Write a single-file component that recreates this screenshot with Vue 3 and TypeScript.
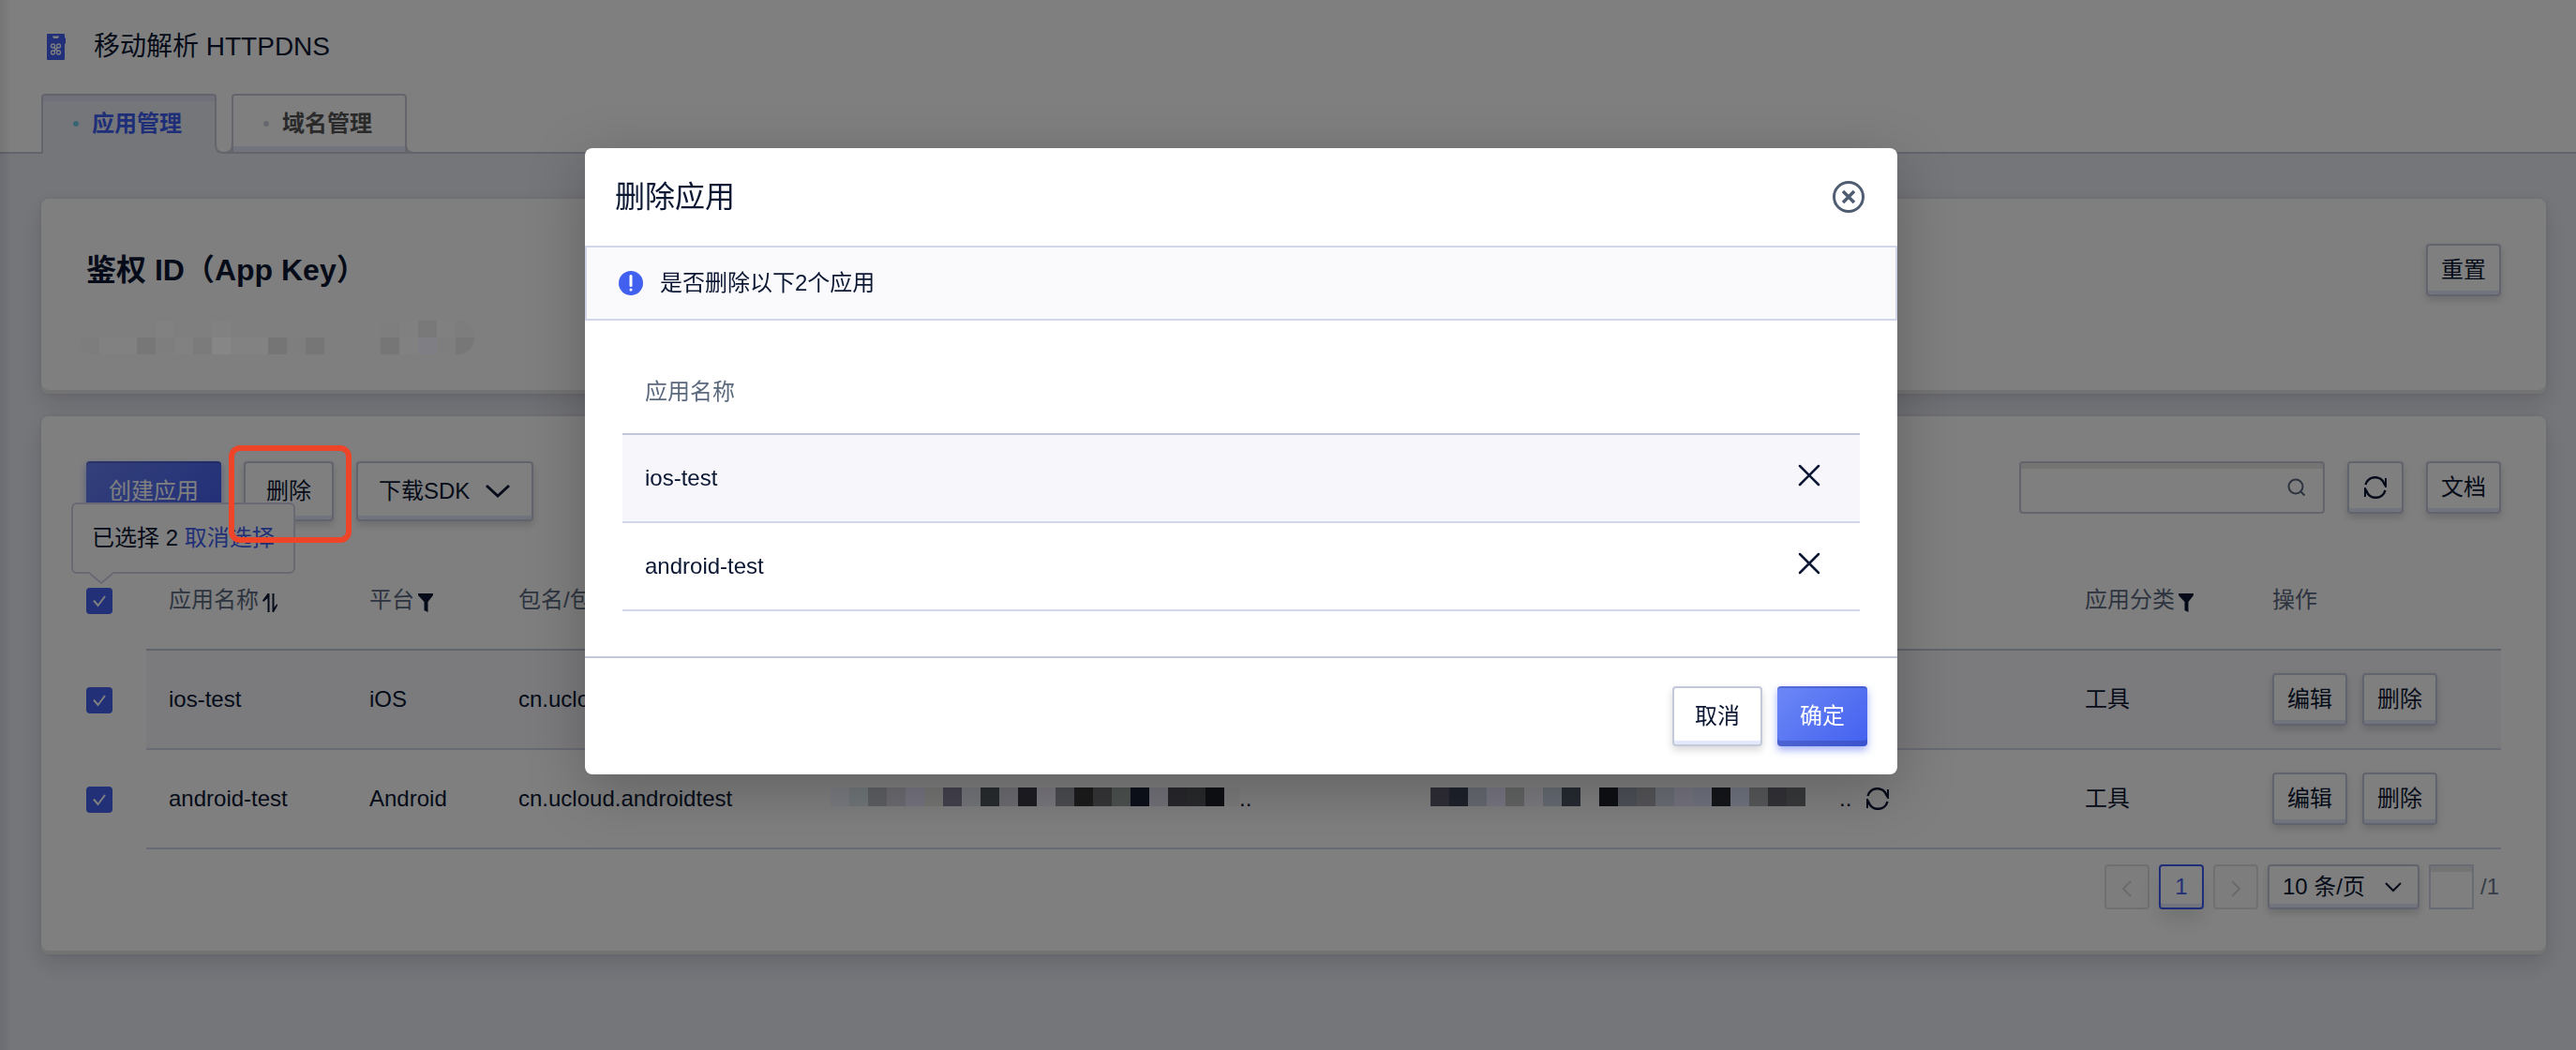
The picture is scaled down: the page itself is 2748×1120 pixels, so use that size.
<script setup lang="ts">
import { ref } from 'vue'

interface AppRow {
  name: string
  platform: string
  pack: string
  category: string
  checked: boolean
  key: string[]
  secret: string[]
}

const idMaskTop = [
  '', '', '', '', '#818181', '', '', '#818181', '', '', '', '', '', '', '', '',
  '#7e7e7e', '#808080', '#797979', '#808080', '#7d7d7d',
]
const idMaskBottom = [
  '#7d7d7d', '#818181', '#818181', '#777777', '#7e7e7e', '#818181', '#7b7b7b',
  '#868686', '#828282', '#828282', '#757575', '#7e7e7e', '#767676', '', '', '',
  '#767676', '#818181', '#7e7e84', '#7e7e7e', '#777777',
]
const keyMask = [
  '#7b7c82', '#71777a', '#5f6064', '#6c6c72', '#767581', '#767775', '#43424e',
  '#75767b', '#282c2f', '#6d6c72', '#1d1d23', '#7a787f', '#4c4d51', '#1b1c1b',
  '#363639', '#4d5250', '#0d111a', '#73727a', '#28272b', '#292a2c', '#0f1014',
  '#7c7c7c',
]
const secretMask = [
  '#2f2e38', '#1e222b', '#666a72', '#787782', '#636464', '#7c7b7f', '#666b73',
  '#262a32', '', '#0f1014', '#4d5058', '#555559', '#6a6d75', '#74737f',
  '#70737e', '#15161b', '#70747f', '#57585a', '#323238', '#38393b', '', '',
]

const rows = ref<AppRow[]>([
  { name: 'ios-test', platform: 'iOS', pack: 'cn.ucloud.iostest', category: '工具', checked: true, key: [], secret: [] },
  { name: 'android-test', platform: 'Android', pack: 'cn.ucloud.androidtest', category: '工具', checked: true, key: keyMask, secret: secretMask },
])
const allChecked = ref(true)
const keyword = ref('')
const jump = ref('')
</script>

<template>
  <div class="page">
    <header class="top">
      <div class="product">
        <svg class="phone" width="20" height="28" viewBox="0 0 20 28" aria-hidden="true">
          <path d="M1 0H18Q19 0 19 1V4L20 5V10L19 11V27Q19 28 18 28H1Q0 28 0 27V1Q0 0 1 0Z" fill="#4460f2" />
          <path d="M6 2.500H13Q12.500 5 11 5H8Q6.500 5 6 2.500Z" fill="#fff" />
          <g fill="none" stroke="#fff" stroke-width="1.300">
            <circle cx="6.500" cy="13" r="2" />
            <circle cx="12.500" cy="13" r="2" />
            <circle cx="6.500" cy="20" r="2" />
            <circle cx="12.500" cy="20" r="2" />
            <path d="M7.500 14.500L11.500 18.500M11.500 14.500L7.500 18.500" />
          </g>
        </svg>
        <h1>移动解析 HTTPDNS</h1>
      </div>
      <nav class="tabs">
        <a href="#apps" class="tab active">
          <i class="dot"></i><span>应用管理</span>
          <svg class="foot foot-right" width="14" height="14" viewBox="0 0 14 14" aria-hidden="true">
            <path class="foot-fill" d="M0 0H1V4Q1 13 10 13V14H0Z" />
            <path class="foot-line" d="M1 0V4Q1 13 10 13H14" />
          </svg>
        </a>
        <a href="#domains" class="tab">
          <svg class="foot foot-left" width="14" height="14" viewBox="0 0 14 14" aria-hidden="true">
            <path class="foot-line" d="M1 4Q1 13 10 13" />
          </svg>
          <i class="dot"></i><span>域名管理</span>
          <svg class="foot foot-right" width="14" height="14" viewBox="0 0 14 14" aria-hidden="true">
            <path class="foot-line" d="M1 4Q1 13 10 13" />
          </svg>
        </a>
      </nav>
    </header>

    <main class="content">
      <section class="card auth">
        <div class="auth-head">
          <h2>鉴权 ID（App Key）</h2>
          <button type="button" class="btn small">重置</button>
        </div>
        <div class="id-mask">
          <div class="mosaic">
            <span v-for="(c, i) in idMaskTop" :key="i" :style="{ background: c }"></span>
          </div>
          <div class="mosaic">
            <span v-for="(c, i) in idMaskBottom" :key="i" :style="{ background: c }"></span>
          </div>
        </div>
      </section>

      <section class="card list">
        <div class="toolbar">
          <button type="button" class="btn primary">创建应用</button>
          <div class="marked">
            <button type="button" class="btn">删除</button>
            <div class="marker"></div>
          </div>
          <button type="button" class="btn" aria-haspopup="menu">
            下载SDK
            <svg class="caret" width="28" height="28" viewBox="0 0 28 28" aria-hidden="true">
              <path d="M2 8L14 19L26 8" />
            </svg>
          </button>
          <div class="tools">
            <div class="search">
              <input v-model="keyword" type="text" aria-label="搜索" />
              <svg width="20" height="20" viewBox="0 0 20 20" aria-hidden="true">
                <circle cx="9" cy="9" r="7.500" />
                <path d="M14.500 14.500L18.500 18.500" />
              </svg>
            </div>
            <button type="button" class="btn small square" aria-label="刷新">
              <svg class="refresh" width="24" height="24" viewBox="0 0 24 24" aria-hidden="true">
                <path class="arc" d="M1.500 9A10.500 10.500 0 0 1 21.500 8M22.500 15A10.500 10.500 0 0 1 2.500 16" />
                <path class="tip" d="M22 2H24V12H22.500L20 8L22 7ZM2 22H0V12H1.500L4 16L2 17Z" />
              </svg>
            </button>
            <button type="button" class="btn small">文档</button>
          </div>
        </div>

        <table class="apps">
          <colgroup>
            <col class="w-check" /><col class="w-name" /><col class="w-platform" />
            <col class="w-pack" /><col /><col class="w-secret" />
            <col class="w-category" /><col class="w-actions" />
          </colgroup>
          <thead>
            <tr>
              <th class="pick">
                <label class="check">
                  <input v-model="allChecked" type="checkbox" aria-label="全选" />
                  <svg width="28" height="28" viewBox="0 0 28 28" aria-hidden="true"><path d="M8 13.500L12.500 19L20 9" /></svg>
                </label>
                <div class="picked">
                  已选择 2 <a href="#clear">取消选择</a>
                  <svg class="beak" width="26" height="13" viewBox="0 0 26 13" aria-hidden="true">
                    <path class="beak-fill" d="M0 0H26L13 12Z" />
                    <path class="beak-line" d="M0 1L13 12L26 1" />
                  </svg>
                </div>
              </th>
              <th>
                <span class="head">应用名称
                  <svg width="16" height="26" viewBox="0 -6 16 26" aria-hidden="true">
                    <path d="M0 7.500L5.500 0H7.500V20H5.500V5L1 9ZM10.500 0H12.500V15L15.500 11L16 13L12 20H10.500Z" />
                  </svg>
                </span>
              </th>
              <th>
                <span class="head">平台
                  <svg width="16" height="26" viewBox="0 -6 16 26" aria-hidden="true">
                    <path d="M0 0H16V2L10.500 9V20L6.500 18V9L0 2Z" />
                  </svg>
                </span>
              </th>
              <th>包名/包</th>
              <th></th>
              <th></th>
              <th>
                <span class="head">应用分类
                  <svg width="16" height="26" viewBox="0 -6 16 26" aria-hidden="true">
                    <path d="M0 0H16V2L10.500 9V20L6.500 18V9L0 2Z" />
                  </svg>
                </span>
              </th>
              <th>操作</th>
            </tr>
          </thead>
          <tbody>
            <tr v-for="row in rows" :key="row.name">
              <td class="pick">
                <label class="check">
                  <input v-model="row.checked" type="checkbox" :aria-label="row.name" />
                  <svg width="28" height="28" viewBox="0 0 28 28" aria-hidden="true"><path d="M8 13.500L12.500 19L20 9" /></svg>
                </label>
              </td>
              <td>{{ row.name }}</td>
              <td>{{ row.platform }}</td>
              <td>{{ row.pack }}</td>
              <td>
                <div v-if="row.key.length" class="masked">
                  <div class="mosaic"><span v-for="(c, i) in row.key" :key="i" :style="{ background: c }"></span></div>
                  <span>..</span>
                </div>
              </td>
              <td>
                <div v-if="row.secret.length" class="masked">
                  <div class="mosaic"><span v-for="(c, i) in row.secret" :key="i" :style="{ background: c }"></span></div>
                  <span>..</span>
                  <svg class="refresh" width="24" height="24" viewBox="0 0 24 24" aria-hidden="true">
                    <path class="arc" d="M1.500 9A10.500 10.500 0 0 1 21.500 8M22.500 15A10.500 10.500 0 0 1 2.500 16" />
                    <path class="tip" d="M22 2H24V12H22.500L20 8L22 7ZM2 22H0V12H1.500L4 16L2 17Z" />
                  </svg>
                </div>
              </td>
              <td>{{ row.category }}</td>
              <td>
                <div class="actions">
                  <button type="button" class="btn small">编辑</button>
                  <button type="button" class="btn small">删除</button>
                </div>
              </td>
            </tr>
          </tbody>
        </table>

        <div class="pager">
          <button type="button" class="page-btn" disabled aria-label="上一页">
            <svg width="16" height="24" viewBox="0 0 16 24" aria-hidden="true"><path d="M12 6L4 14L12 22" /></svg>
          </button>
          <button type="button" class="page-btn current">1</button>
          <button type="button" class="page-btn" disabled aria-label="下一页">
            <svg width="16" height="24" viewBox="0 0 16 24" aria-hidden="true"><path d="M4 6L12 14L4 22" /></svg>
          </button>
          <div class="size">
            <select aria-label="每页条数">
              <option>10 条/页</option>
            </select>
            <svg width="18" height="12" viewBox="0 0 18 12" aria-hidden="true"><path d="M1 2L9 10L17 2" /></svg>
          </div>
          <input v-model="jump" class="jump" type="text" aria-label="跳至页" />
          <span class="total">/1</span>
        </div>
      </section>
    </main>

    <div class="backdrop"></div>

    <div class="layer">
      <div class="modal" role="dialog" aria-labelledby="dialog-title">
        <div class="modal-head">
          <h2 id="dialog-title">删除应用</h2>
          <button type="button" class="plain" aria-label="关闭">
            <svg width="34" height="34" viewBox="0 0 34 34" fill="none" stroke="#4f5d73" aria-hidden="true">
              <circle cx="17" cy="17" r="15.500" stroke-width="3" />
              <path d="M11 11L23 23M23 11L11 23" stroke-width="3.500" />
            </svg>
          </button>
        </div>
        <div class="notice">
          <svg width="26" height="26" viewBox="0 0 26 26" aria-hidden="true">
            <circle cx="13" cy="13" r="13" fill="#4260ef" />
            <rect x="11.500" y="4" width="3" height="13" rx="1.500" fill="#fff" />
            <circle cx="13" cy="20" r="1.500" fill="#fff" />
          </svg>
          <span>是否删除以下2个应用</span>
        </div>
        <div class="modal-body">
          <table class="targets">
            <thead>
              <tr><th>应用名称</th><th class="w-remove"></th></tr>
            </thead>
            <tbody>
              <tr v-for="row in rows" :key="row.name">
                <td>{{ row.name }}</td>
                <td class="w-remove">
                  <button type="button" class="plain" aria-label="移除">
                    <svg width="24" height="30" viewBox="0 0 24 30" aria-hidden="true">
                      <path d="M2 2L22 22M22 2L2 22" fill="none" stroke="#0b1733" stroke-width="2.500" stroke-linecap="round" />
                    </svg>
                  </button>
                </td>
              </tr>
            </tbody>
          </table>
        </div>
        <div class="modal-foot">
          <button type="button" class="btn">取消</button>
          <button type="button" class="btn primary">确定</button>
        </div>
      </div>
    </div>
  </div>
</template>

<style>
body {
  margin: 0;
  background: #ebedf5;
}
</style>

<style scoped>
.page,
.page * {
  box-sizing: border-box;
}
.page {
  min-height: 100vh;
  background: #ebedf5;
  color: #0b1733;
  font-family: "Liberation Sans", "Noto Sans CJK SC", sans-serif;
  font-size: 24px;
  line-height: 32px;
}
button,
input,
select {
  font: inherit;
  color: inherit;
  margin: 0;
}
h1,
h2 {
  margin: 0;
  font-weight: 400;
}
a {
  text-decoration: none;
}
svg {
  display: block;
  flex: none;
}

.top {
  background: #fff;
  border-bottom: 2px solid #c8cbd8;
  padding-left: 44px;
}
.product {
  display: flex;
  align-items: center;
  gap: 30px;
  height: 100px;
  padding-left: 6px;
}
.product h1 {
  font-size: 28px;
}
.tabs {
  display: flex;
  gap: 16px;
}
.tab {
  position: relative;
  display: flex;
  align-items: center;
  height: 62px;
  padding: 0 35px 0 32px;
  border: 2px solid #c8cbd8;
  border-bottom: 0;
  border-radius: 4px 4px 0 0;
  box-shadow: inset 0 -6px #e3e7fb;
  color: #545454;
  font-weight: 700;
}
.tab.active {
  height: 64px;
  margin-bottom: -2px;
  padding-bottom: 2px;
  background: #ebedf5;
  box-shadow: inset 0 6px #dfe0f4;
  color: #3f5cf0;
}
.dot {
  width: 6px;
  height: 6px;
  margin-right: 14px;
  border-radius: 3px;
  background: #d0d3dc;
}
.active .dot {
  background: #6ecbe6;
}
.foot {
  position: absolute;
  bottom: -2px;
}
.active .foot {
  bottom: 0;
}
.foot-right {
  left: 100%;
}
.foot-left {
  right: 100%;
  transform: scaleX(-1);
}
.foot-fill {
  fill: #ebedf5;
}
.foot-line {
  fill: none;
  stroke: #c8cbd8;
  stroke-width: 2;
}

.content {
  display: flex;
  flex-direction: column;
  gap: 24px;
  padding: 48px 32px 48px 44px;
}
.card {
  border-radius: 8px;
  background: #fff;
  box-shadow: inset 0 -4px #e6e6e6, 0 0 4px rgba(30, 35, 60, 0.08), 0 10px 24px rgba(20, 20, 40, 0.14);
}
.auth {
  padding: 48px 48px 42px;
}
.auth-head {
  display: flex;
  align-items: center;
  justify-content: space-between;
}
.auth-head h2 {
  font-size: 32px;
  font-weight: 700;
}
.mosaic {
  position: relative;
  z-index: 15;
  display: flex;
}
.mosaic span {
  width: 20px;
  height: 20px;
}
.id-mask {
  margin: 26px 0 0 -6px;
}
.id-mask .mosaic span {
  height: 18px;
}
.id-mask .mosaic:first-child span:last-child {
  border-top-right-radius: 18px;
}
.id-mask .mosaic:last-child span:last-child {
  border-bottom-right-radius: 18px;
}
.id-mask .mosaic:last-child span:first-child {
  border-bottom-left-radius: 10px;
}

.btn {
  display: flex;
  align-items: center;
  justify-content: center;
  gap: 16px;
  height: 64px;
  padding: 0 22px;
  border: 2px solid #c3c9d9;
  border-radius: 4px;
  background: #fff;
  box-shadow: inset 0 -4px #e3e8fb, 0 4px 8px rgba(0, 0, 0, 0.16);
  white-space: nowrap;
}
.btn.small {
  height: 56px;
  padding: 0 14px;
}
.btn.square {
  width: 60px;
}
.btn.primary {
  padding: 0 24px;
  border: 0;
  background: linear-gradient(135deg, #6d88f6, #4260ef);
  box-shadow: inset 0 2px rgba(40, 50, 130, 0.3), inset 0 -6px rgba(40, 50, 130, 0.3), 0 4px 8px rgba(66, 96, 239, 0.5);
  color: #fff;
}
.caret path,
.size path {
  fill: none;
  stroke: #0b1733;
  stroke-width: 3;
}
.refresh .arc {
  fill: none;
  stroke: #0b1733;
  stroke-width: 2.5;
}
.refresh .tip {
  fill: #0b1733;
}

.list {
  padding: 48px;
}
.list .primary {
  background: linear-gradient(135deg, #6981f4, #425df0);
}
.toolbar {
  display: flex;
  align-items: flex-start;
  gap: 24px;
}
.marked {
  position: relative;
}
.marker {
  position: absolute;
  z-index: 30;
  inset: -17px -19px -23px -16px;
  border: 6px solid #ee4427;
  border-radius: 12px;
  pointer-events: none;
}
.tools {
  display: flex;
  gap: 24px;
  margin-left: auto;
}
.search {
  display: flex;
  align-items: center;
  width: 326px;
  height: 56px;
  padding-right: 18px;
  border: 2px solid #c8cbd8;
  border-radius: 4px;
  box-shadow: inset 0 6px #e9e9e7;
}
.search input {
  flex: 1;
  min-width: 0;
  height: 40px;
  padding: 0 16px;
  border: 0;
  outline: 0;
  background: none;
}
.search svg {
  fill: none;
  stroke: #5b697f;
  stroke-width: 2;
}

table {
  width: 100%;
  border-spacing: 0;
  table-layout: fixed;
}
th,
td {
  text-align: left;
  font-weight: 400;
  white-space: nowrap;
}
th {
  color: #5b697f;
  border-bottom: 2px solid #c1c8d6;
}
td {
  border-bottom: 2px solid #d3d6e9;
}
tbody tr:first-child td {
  background: #f6f6fb;
}
.apps {
  margin-top: 32px;
}
.apps th,
.apps td {
  height: 106px;
  padding: 0 24px;
}
.apps tbody tr .pick,
.apps .pick {
  position: relative;
  padding: 0;
  border: 0;
  background: none;
}
.w-check {
  width: 64px;
}
.w-name {
  width: 214px;
}
.w-platform {
  width: 159px;
}
.w-pack {
  width: 333px;
}
.w-secret {
  width: 698px;
}
.w-category {
  width: 200px;
}
.w-actions {
  width: 268px;
}
.head {
  display: flex;
  align-items: center;
  gap: 4px;
}
.head svg {
  fill: #0b1733;
}
.check {
  display: grid;
  width: 28px;
  height: 28px;
}
.check input,
.check svg {
  grid-area: 1 / 1;
}
.check input {
  appearance: none;
  width: 28px;
  height: 28px;
  border-radius: 4px;
  background: #4260ef;
}
.check svg {
  fill: none;
  stroke: #fff;
  stroke-width: 2;
  pointer-events: none;
}
.picked {
  position: absolute;
  z-index: 1;
  bottom: 82px;
  left: -16px;
  height: 76px;
  padding: 20px;
  border: 2px solid #d0d3e4;
  border-radius: 6px;
  background: #fff;
  color: #0b1733;
}
.picked a {
  color: #4260ef;
}
.beak {
  position: absolute;
  top: 100%;
  left: 17px;
}
.beak-fill {
  fill: #fff;
}
.beak-line {
  fill: none;
  stroke: #d0d3e4;
  stroke-width: 2;
}
.masked {
  display: flex;
  align-items: flex-start;
  height: 32px;
}
.masked .mosaic,
.masked .refresh {
  margin-top: 4px;
}
.masked .mosaic span:last-child {
  width: 16px;
}
.masked .refresh {
  margin-left: 16px;
}
.actions {
  display: flex;
  gap: 16px;
}

.pager {
  display: flex;
  justify-content: flex-end;
  align-items: center;
  gap: 10px;
  margin-top: 16px;
}
.page-btn {
  display: flex;
  align-items: center;
  justify-content: center;
  width: 48px;
  height: 48px;
  padding: 0;
  border: 2px solid #e0e0e0;
  border-radius: 4px;
  background: #fafafa;
}
.page-btn path {
  fill: none;
  stroke: #d4d4d4;
  stroke-width: 2;
}
.page-btn.current {
  border-color: #3f5cf0;
  background: #fff;
  box-shadow: inset 0 -4px #e3e8fb, 0 12px 20px rgba(0, 0, 0, 0.1);
  color: #4260ef;
}
.size {
  display: grid;
  align-items: center;
  width: 162px;
  height: 48px;
  border: 2px solid #c3c9d9;
  border-radius: 4px;
  box-shadow: inset 0 -4px #e3e8fb, 0 4px 8px rgba(0, 0, 0, 0.16);
}
.size select,
.size svg {
  grid-area: 1 / 1;
}
.size select {
  appearance: none;
  width: 100%;
  height: 44px;
  padding: 0 14px;
  border: 0;
  background: none;
}
.size svg {
  justify-self: end;
  margin-right: 17px;
  pointer-events: none;
}
.size path {
  stroke-width: 2;
}
.jump {
  width: 48px;
  height: 48px;
  padding: 0 8px;
  border: 2px solid #d3d6e9;
  background: #fff;
  box-shadow: inset 0 6px #e9e9e9;
}
.total {
  margin: 0 2px 0 -3px;
  color: #6b798e;
}

.backdrop {
  position: fixed;
  z-index: 10;
  inset: 0;
  background: linear-gradient(90deg, rgba(0, 0, 20, 0.08), transparent 12px), rgba(0, 0, 0, 0.5);
}
.layer {
  position: fixed;
  z-index: 20;
  inset: 0;
  display: flex;
  align-items: flex-start;
  justify-content: center;
  padding: 158px 100px 0 0;
}
.modal {
  width: 1400px;
  max-width: 100%;
  border-radius: 8px;
  background: #fff;
  box-shadow: 0 16px 64px rgba(0, 0, 0, 0.24);
}
.modal-head {
  display: flex;
  align-items: center;
  justify-content: space-between;
  height: 104px;
  padding: 0 35px 0 32px;
}
.modal-head h2 {
  font-size: 32px;
}
.plain {
  display: block;
  padding: 0;
  border: 0;
  background: none;
}
.notice {
  display: flex;
  align-items: center;
  gap: 18px;
  height: 80px;
  padding: 0 34px;
  border: 2px solid #d3d6e9;
  background: #fafafc;
}
.modal-body {
  padding: 32px 40px 48px;
}
.targets th,
.targets td {
  padding: 0 24px;
}
.targets th {
  height: 90px;
  border-bottom-color: #c3c7d9;
}
.targets td {
  height: 94px;
}
.targets .w-remove {
  width: 90px;
}
.modal-foot {
  display: flex;
  justify-content: flex-end;
  gap: 16px;
  padding: 30px 32px;
  border-top: 2px solid #c3c9d9;
}
</style>
